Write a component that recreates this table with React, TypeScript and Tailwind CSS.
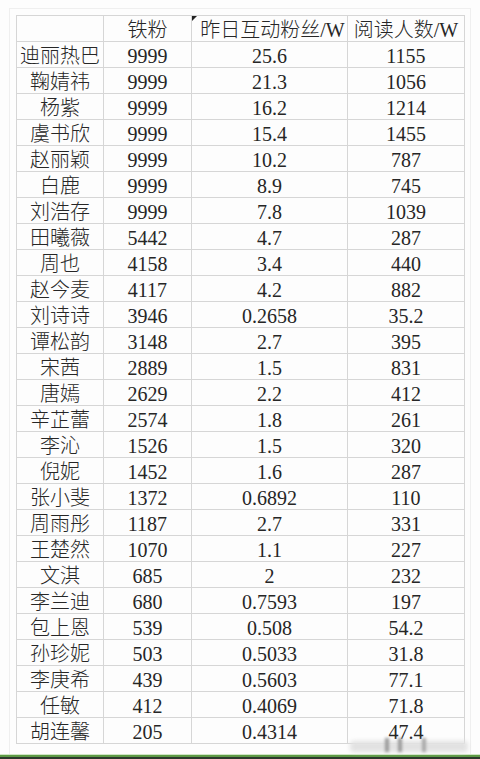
import React from "react";

const rows: [string, string, string, string][] = [
  ["迪丽热巴", "9999", "25.6", "1155"],
  ["鞠婧祎", "9999", "21.3", "1056"],
  ["杨紫", "9999", "16.2", "1214"],
  ["虞书欣", "9999", "15.4", "1455"],
  ["赵丽颖", "9999", "10.2", "787"],
  ["白鹿", "9999", "8.9", "745"],
  ["刘浩存", "9999", "7.8", "1039"],
  ["田曦薇", "5442", "4.7", "287"],
  ["周也", "4158", "3.4", "440"],
  ["赵今麦", "4117", "4.2", "882"],
  ["刘诗诗", "3946", "0.2658", "35.2"],
  ["谭松韵", "3148", "2.7", "395"],
  ["宋茜", "2889", "1.5", "831"],
  ["唐嫣", "2629", "2.2", "412"],
  ["辛芷蕾", "2574", "1.8", "261"],
  ["李沁", "1526", "1.5", "320"],
  ["倪妮", "1452", "1.6", "287"],
  ["张小斐", "1372", "0.6892", "110"],
  ["周雨彤", "1187", "2.7", "331"],
  ["王楚然", "1070", "1.1", "227"],
  ["文淇", "685", "2", "232"],
  ["李兰迪", "680", "0.7593", "197"],
  ["包上恩", "539", "0.508", "54.2"],
  ["孙珍妮", "503", "0.5033", "31.8"],
  ["李庚希", "439", "0.5603", "77.1"],
  ["任敏", "412", "0.4069", "71.8"],
  ["胡连馨", "205", "0.4314", "47.4"],
];

const font = { fontFamily: "'Liberation Serif', 'Noto Sans CJK SC', serif" };

const Cell = ({ children, className = "" }: { children?: React.ReactNode; className?: string }) => (
  <div
    className={`h-[26px] border-r border-b border-[#d6d6d6] flex items-center justify-center whitespace-nowrap pt-[2px] ${className}`}
  >
    {children}
  </div>
);

export default function App() {
  return (
    <div
      className="relative w-[480px] h-[759px] bg-[#fdfdfd] text-[#262626] text-[20px] font-light leading-none flex flex-col overflow-hidden"
      style={font}
    >
      <div className="flex-1 mx-[9px] mt-[8px] border-l border-r border-t border-[#efefef] pt-[6px] pl-[6px]">
        <div className="grid grid-cols-[87px_88px_156px_117px] border-l border-t border-[#d6d6d6] w-[449px]">
          <Cell />
          <Cell>铁粉</Cell>
          <Cell className="relative pl-[6px]">
            <span className="absolute left-0 top-0 w-0 h-0 border-t-[5px] border-r-[5px] border-t-[#222] border-r-transparent" />
            昨日互动粉丝/W
          </Cell>
          <Cell>阅读人数/W</Cell>
          {rows.map((r) => (
            <React.Fragment key={r[0]}>
              <Cell>{r[0]}</Cell>
              <Cell>{r[1]}</Cell>
              <Cell>{r[2]}</Cell>
              <Cell>{r[3]}</Cell>
            </React.Fragment>
          ))}
        </div>
      </div>

      {/* blurred watermark */}
      <div className="absolute left-[350px] top-[741px] w-[118px] h-[11px] bg-[#e2e2e2] blur-[2px] rounded" />
      <div className="absolute left-[385px] top-[738px] w-[4px] h-[14px] bg-[#9a9a9a] blur-[1.5px]" />
      <div className="absolute left-[398px] top-[738px] w-[4px] h-[14px] bg-[#9a9a9a] blur-[1.5px]" />
      <div className="absolute left-[422px] top-[738px] w-[4px] h-[14px] bg-[#a8a8a8] blur-[1.5px]" />

      <div className="h-[1px] bg-[#cfe6c4]" />
      <div className="h-[2px] bg-[#5d9a45]" />
      <div className="h-[2px] bg-[#2c3a2c]" />
    </div>
  );
}
